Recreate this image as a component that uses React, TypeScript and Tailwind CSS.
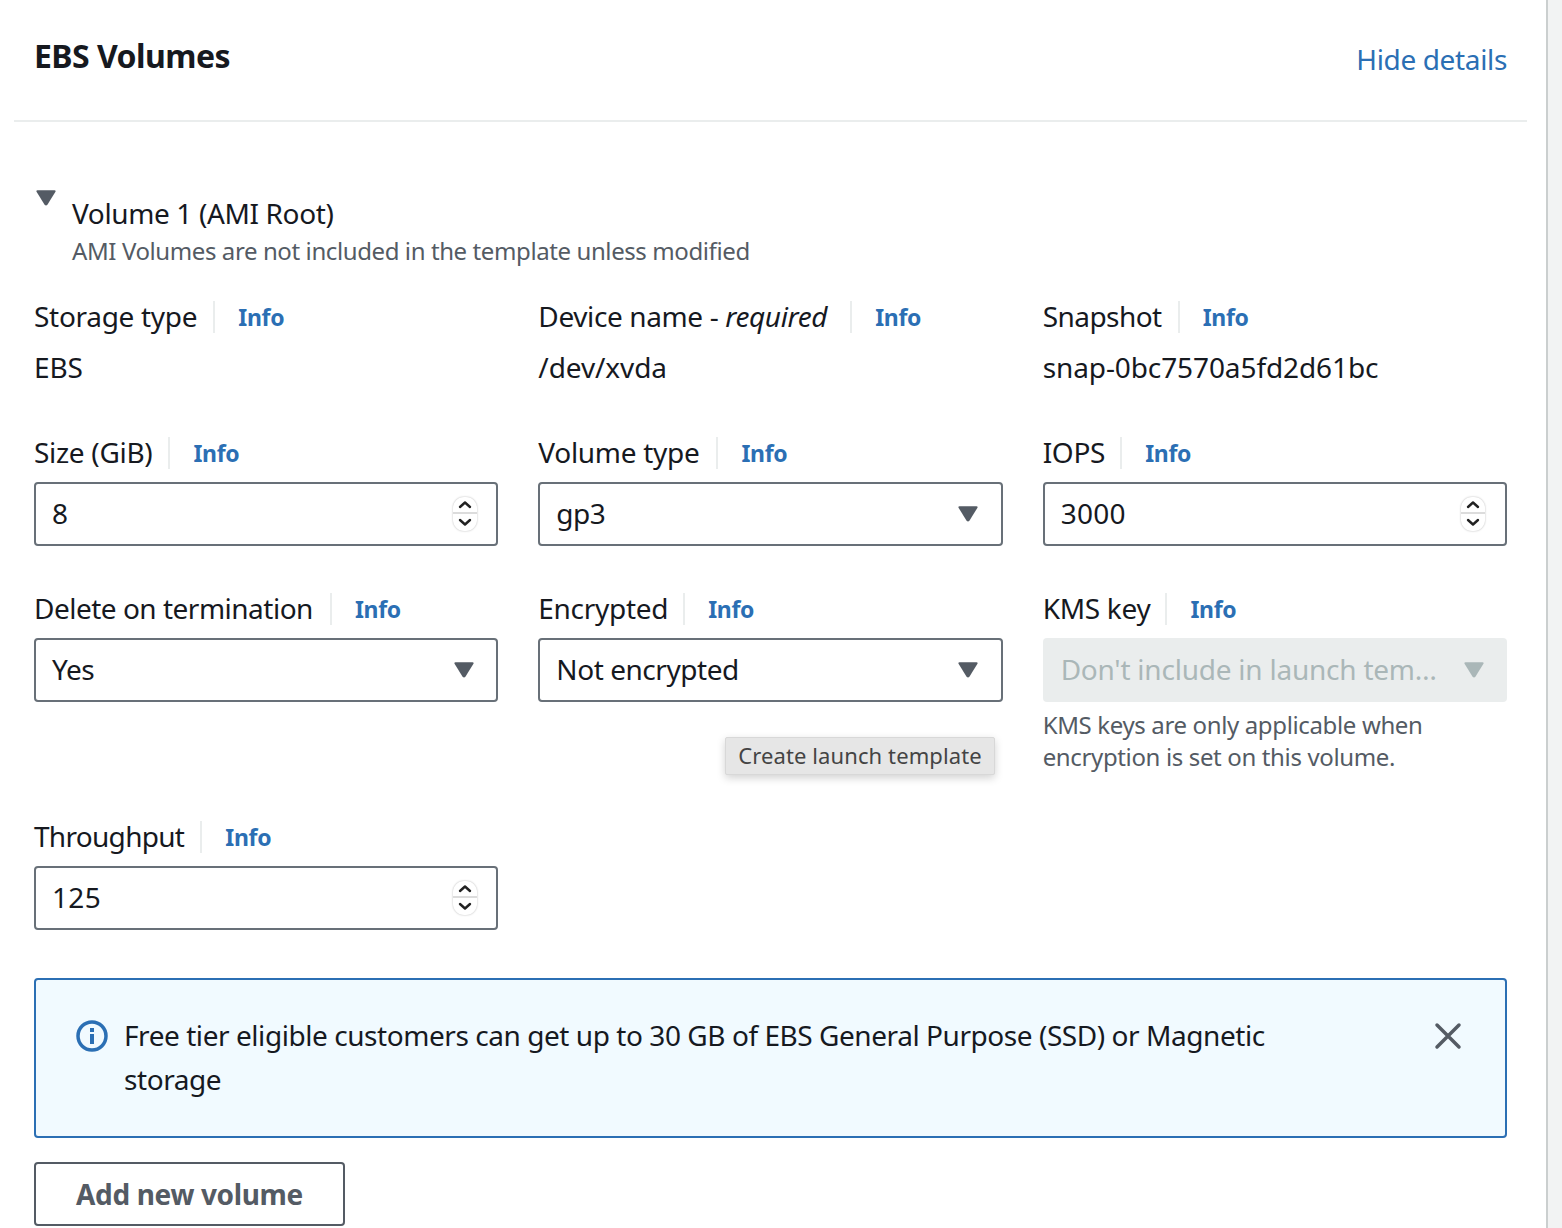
import React from "react";

const Caret = ({ color = "#545b64", className = "" }: { color?: string; className?: string }) => (
  <svg width="20" height="16" viewBox="0 0 20 16" className={className}>
    <path d="M1.5 0.3H18.5Q20.2 0.3 19.3 2L11.4 14.8Q10 16.4 8.6 14.8L0.7 2Q-0.2 0.3 1.5 0.3Z" fill={color} />
  </svg>
);

const Spinner = ({ className = "mr-px" }: { className?: string }) => (
  <div className={`w-6 h-[34px] rounded-[11px] bg-white shadow-[0_0_2px_rgba(0,0,0,0.3)] flex flex-col shrink-0 ${className}`}>
    <div className="h-[17px] border-b-2 border-[#dcdcdc] flex items-center justify-center">
      <svg width="14" height="9" viewBox="0 0 14 9"><path d="M2 7L7 2.5L12 7" fill="none" stroke="#222" strokeWidth="2.4" strokeLinecap="round" strokeLinejoin="round" /></svg>
    </div>
    <div className="h-[17px] flex items-center justify-center">
      <svg width="14" height="9" viewBox="0 0 14 9"><path d="M2 2L7 6.5L12 2" fill="none" stroke="#222" strokeWidth="2.4" strokeLinecap="round" strokeLinejoin="round" /></svg>
    </div>
  </div>
);

const Label = ({ children, text = "tracking-[-0.3px] pr-[15px]" }: { children: React.ReactNode; text?: string }) => (
  <div className="flex items-center h-11">
    <span className={`text-[28px] leading-[44px] text-[#16191f] -translate-y-px ${text}`}>{children}</span>
    <span className="w-0.5 h-8 bg-[#eaeded]" />
    <span className="pl-[23px] text-[23px] tracking-[-0.3px] font-bold text-[#2b6fb4] leading-[44px] mt-0.5 -translate-y-px">Info</span>
  </div>
);

const Box = ({ value, right, tracking }: { value: string; right: React.ReactNode; tracking: string }) => (
  <div className="mt-[7px] h-16 border-2 border-[#687078] rounded-[4px] bg-white pl-4 pr-[18px] flex items-center justify-between">
    <span className={`text-[28px] text-[#16191f] -translate-y-px ${tracking}`}>{value}</span>
    {right}
  </div>
);

const Num = ({ label, value, spin, text }: { label: string; value: string; spin?: string; text?: string }) => (
  <div>
    <Label text={text}>{label}</Label>
    <Box value={value} tracking="tracking-[0.3px]" right={<Spinner className={spin} />} />
  </div>
);

const Sel = ({ label, value, caret = "mr-1", text }: { label: string; value: string; caret?: string; text?: string }) => (
  <div>
    <Label text={text}>{label}</Label>
    <Box value={value} tracking="tracking-[-0.45px]" right={<Caret className={caret} />} />
  </div>
);

const Plain = ({ label, value, text }: { label: React.ReactNode; value: string; text?: string }) => (
  <div>
    <Label text={text}>{label}</Label>
    <div className="mt-[7px] text-[28px] leading-[44px] tracking-[-0.1px] text-[#16191f] -translate-y-px">{value}</div>
  </div>
);

export default function App() {
  return (
    <div className="flex h-[1228px] overflow-hidden bg-[#f2f3f3] font-['Noto_Sans','Open_Sans',sans-serif]">
      <div className="relative w-[1548px] shrink-0 bg-white border-r-2 border-[#cbcfcf] pl-[14px] pr-[19px]">
        <div className="h-[122px] border-b-2 border-[#eaeded] pl-5 pr-5 flex justify-between items-start">
          <h2 className="mt-[34px] text-[32px] leading-[44px] tracking-[-0.55px] font-bold text-[#16191f]">EBS Volumes</h2>
          <a className="mt-[37px] text-[28px] leading-[44px] tracking-[-0.35px] text-[#2b6fb4]">Hide details</a>
        </div>
        <div className="px-5">
          <div className="flex items-start mt-[68px]">
            <Caret className="ml-0.5 shrink-0" />
            <div className="ml-4 mt-px">
              <div className="text-[28px] leading-[44px] tracking-[-0.37px] text-[#16191f]">Volume 1 (AMI Root)</div>
              <div className="text-[24px] leading-[32px] tracking-[-0.4px] text-[#545b64]">AMI Volumes are not included in the template unless modified</div>
            </div>
          </div>
          <div className="mt-[28px] grid grid-cols-3 gap-x-10 gap-y-[41px] items-start">
            <Plain label="Storage type" value="EBS" text="tracking-[-0.3px] pr-4" />
            <Plain label={<>Device name - <i>required</i></>} value="/dev/xvda" text="tracking-[-0.38px] pr-[23px]" />
            <Plain label="Snapshot" value="snap-0bc7570a5fd2d61bc" text="tracking-[-0.55px] pr-[16px]" />
            <Num label="Size (GiB)" value="8" text="tracking-[-0.3px] pr-4" />
            <Sel label="Volume type" value="gp3" caret="mr-[5px]" text="tracking-[-0.3px] pr-[17px]" />
            <Num label="IOPS" value="3000" spin="mr-0.5" />
            <Sel label="Delete on termination" value="Yes" text="tracking-[-0.5px] pr-[17px]" />
            <Sel label="Encrypted" value="Not encrypted" caret="mr-[5px]" />
            <div>
              <Label>KMS key</Label>
              <div className="mt-[7px] h-16 rounded-[4px] bg-[#eaeded] pl-[18px] pr-[23px] flex items-center justify-between">
                <span className="text-[28px] tracking-[-0.23px] text-[#aab7b8] truncate -translate-y-px">Don't include in launch tem…</span>
                <Caret color="#aab7b8" className="shrink-0" />
              </div>
              <div className="mt-2 text-[24px] leading-[32px] tracking-[-0.36px] text-[#545b64] -translate-y-px">
                KMS keys are only applicable when<br />encryption is set on this volume.
              </div>
            </div>
            <Num label="Throughput" value="125" text="tracking-[-0.7px] pr-[16px]" />
          </div>
          <div className="mt-12 h-40 border-2 border-[#2b6fb4] rounded-[4px] bg-[#f1faff] pl-10 pr-[43px] py-[34px] flex items-start">
            <svg width="32" height="32" viewBox="0 0 32 32" className="shrink-0 mt-1.5">
              <circle cx="16" cy="16" r="14" fill="none" stroke="#2b6fb4" strokeWidth="3.5" />
              <rect x="14" y="14" width="4" height="10" fill="#2b6fb4" />
              <rect x="14" y="8" width="4" height="4" fill="#2b6fb4" />
            </svg>
            <div className="ml-4 flex-1 text-[28px] leading-[44px] tracking-[-0.44px] text-[#16191f] -translate-y-px">
              Free tier eligible customers can get up to 30 GB of EBS General Purpose (SSD) or Magnetic<br />storage
            </div>
            <svg width="28" height="28" viewBox="0 0 28 28" className="shrink-0 mt-2">
              <path d="M3 3L25 25M25 3L3 25" stroke="#545b64" strokeWidth="3.5" strokeLinecap="round" />
            </svg>
          </div>
          <button className="mt-6 w-[311px] h-16 border-2 border-[#545b64] rounded-[4px] bg-white text-[28px] tracking-[-0.35px] font-bold text-[#545b64]">
            <span className="block">Add new volume</span>
          </button>
        </div>
        <div className="absolute left-[725px] top-[737px] w-[270px] h-[38px] rounded-[2px] bg-[#e6e6e6] border border-[#d8d8d8] shadow-[0_3px_8px_rgba(0,0,0,0.18)] flex items-center justify-center text-[22px] tracking-[0.1px] text-[#444]">
          <span className="-translate-y-px">Create launch template</span>
        </div>
      </div>
    </div>
  );
}
